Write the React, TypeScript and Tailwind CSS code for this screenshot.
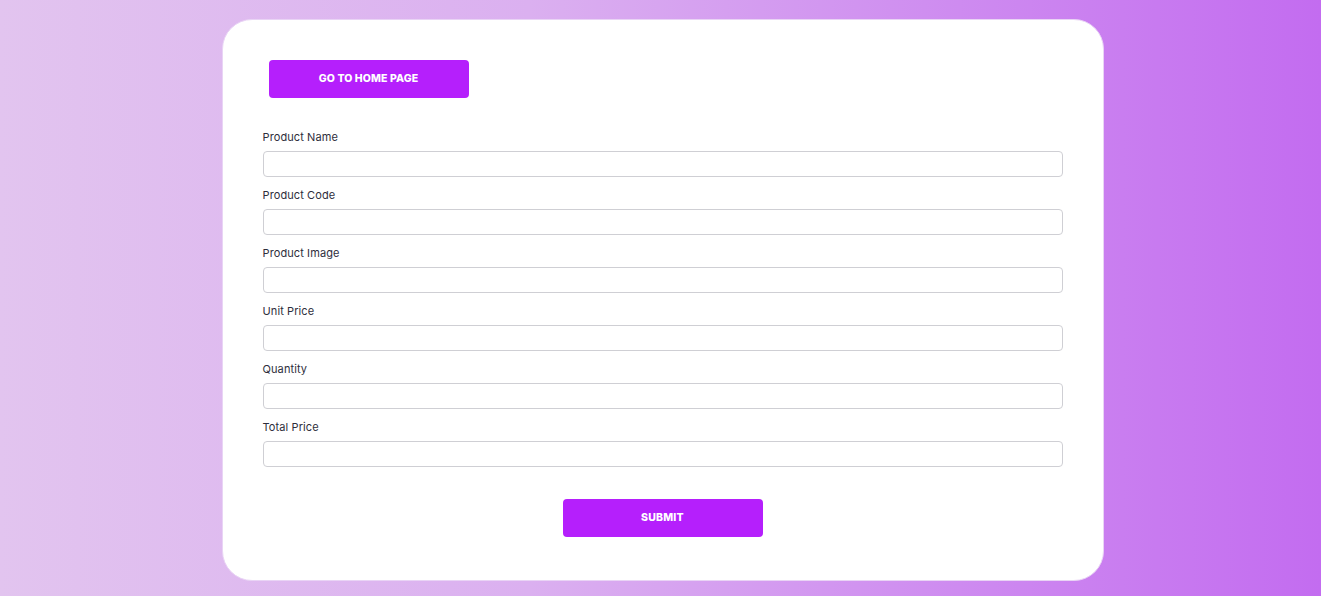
import { useState } from "react";

const fields = [
    "Product Name",
    "Product Code",
    "Product Image",
    "Unit Price",
    "Quantity",
    "Total Price",
];

function Field({ label }: { label: string }) {
    const [value, setValue] = useState("");
    return (
        <div className="flex flex-col">
            <label className="text-[11px] leading-[16px] tracking-[0.1px] text-[#2e2e3c] mb-[6px]">{label}</label>
            <input
                value={value}
                onChange={(e) => setValue(e.target.value)}
                className="h-[26px] w-full rounded-[4px] border border-[#cfcfd4] bg-white px-2 text-[12px] outline-none"
            />
        </div>
    );
}

export default function App() {
    return (
        <div
            className="min-h-[596px] w-full bg-[linear-gradient(to_right,#e2c4ef,#dbb0f0_40%,#c36cf0)] pl-[4px] pt-[19px] pb-[15px]"
            style={{ fontFamily: "Inter, 'Noto Sans', sans-serif" }}
        >
            <div className="mx-auto w-[882px] h-[562px] rounded-[30px] border border-[#e9d4f5] bg-white px-[40px] pt-[40px]">
                <button
                    type="button"
                    className="ml-[6px] h-[38px] w-[200px] rounded-[4px] bg-[#b51ffc] text-[10.5px] font-extrabold uppercase tracking-[0.1px] text-white"
                >
                    Go to home page
                </button>
                <form className="mt-[31px] flex flex-col gap-[10px]" onSubmit={(e) => e.preventDefault()}>
                    {fields.map((f) => (
                        <Field key={f} label={f} />
                    ))}
                    <div className="mt-[22px] flex justify-center">
                        <button
                            type="submit"
                            className="h-[38px] w-[200px] rounded-[4px] bg-[#b51ffc] text-[10.5px] font-extrabold uppercase tracking-[0.2px] text-white"
                        >
                            Submit
                        </button>
                    </div>
                </form>
            </div>
        </div>
    );
}
